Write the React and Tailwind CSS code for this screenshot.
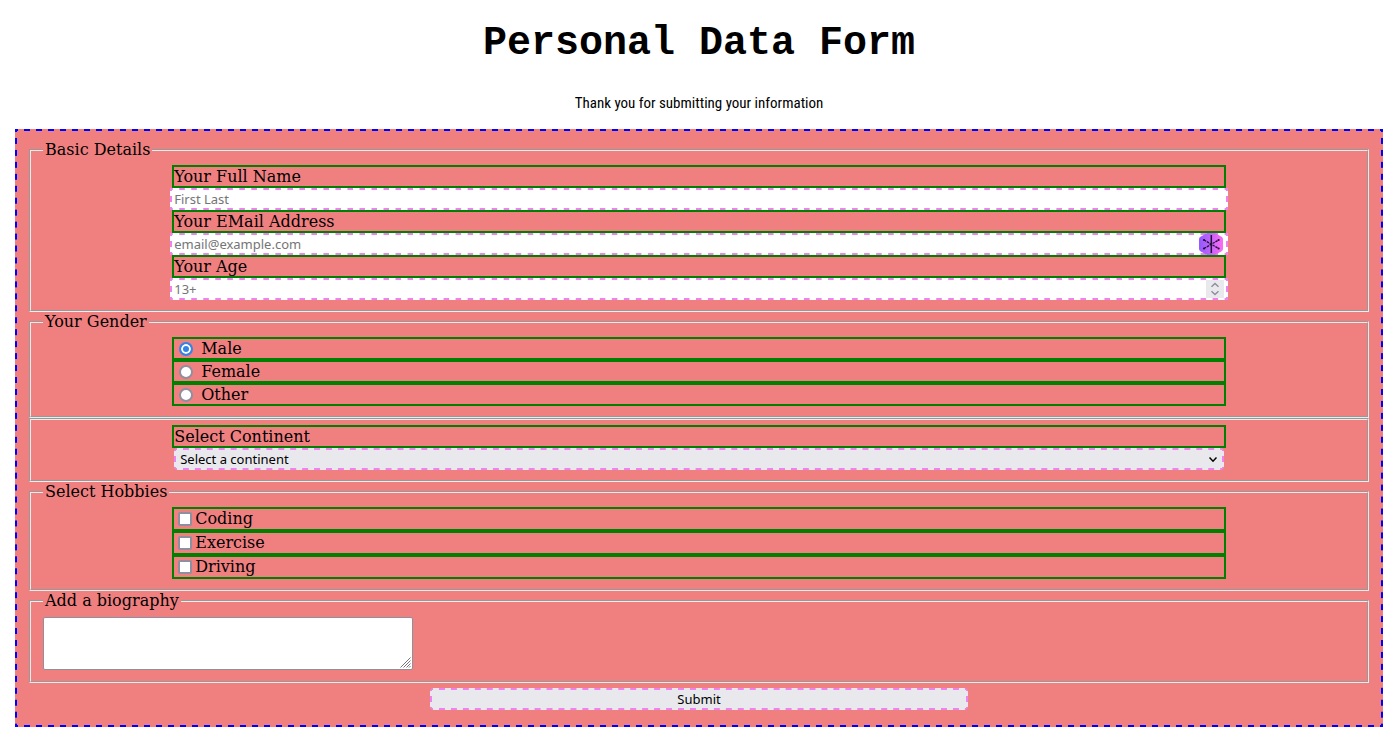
import { useId } from "react";

// Evenly spaced 6px dashes along all four edges, coloured by --dash.
const dashed =
  "border-2 border-transparent bg-origin-border [background-image:linear-gradient(90deg,var(--dash)_25%,transparent_25%_75%,var(--dash)_75%),linear-gradient(90deg,var(--dash)_25%,transparent_25%_75%,var(--dash)_75%),linear-gradient(var(--dash)_25%,transparent_25%_75%,var(--dash)_75%),linear-gradient(var(--dash)_25%,transparent_25%_75%,var(--dash)_75%)] [background-position:0_0,0_100%,0_0,100%_0] [background-repeat:round_no-repeat,round_no-repeat,no-repeat_round,no-repeat_round] [background-size:12px_2px,12px_2px,2px_12px,2px_12px]";

const control = `${dashed} [--dash:violet] block h-[22px] w-full font-['Noto_Sans',sans-serif] text-[13px] leading-[18px] outline-none`;

function Group({ legend, className = "pt-[6px] pb-[10px]", children }) {
  return (
    <fieldset className={`border-2 border-[#ececec] px-3 [border-style:groove] ${className}`}>
      {legend && <legend className="px-[2px] leading-[19px]">{legend}</legend>}
      {children}
    </fieldset>
  );
}

function Column({ children }) {
  return <div className="mx-auto w-[calc(80%+4px)]">{children}</div>;
}

function Field({ label, children, ...input }) {
  const id = useId();
  return (
    <>
      <label htmlFor={id} className="block border-2 border-[green] leading-[19px]">
        {label}
      </label>
      <div className="relative -mx-[2px]">
        <input
          id={id}
          className={`${control} bg-white px-[2px] text-black [appearance:textfield] placeholder:text-[#757575] [&::-webkit-inner-spin-button]:appearance-none`}
          {...input}
        />
        {children}
      </div>
    </>
  );
}

function Radio({ label, ...props }) {
  return (
    <label className="flex items-center border-2 border-[green] pl-[5px] leading-[19px]">
      <input
        type="radio"
        name="gender"
        className="mr-2 size-[14px] appearance-none rounded-full border-2 border-[#8f8f9d] bg-white checked:border-[#3584e4] checked:bg-[#3584e4] checked:shadow-[inset_0_0_0_2px_white]"
        {...props}
      />
      {label}
    </label>
  );
}

function Check({ label }) {
  return (
    <label className="flex items-center border-2 border-[green] pl-1 leading-5">
      <input
        type="checkbox"
        className="mr-[3px] size-[14px] appearance-none rounded-[2px] border-2 border-[#8f8f9d] bg-white checked:bg-[#3584e4]"
      />
      {label}
    </label>
  );
}

function MaskIcon() {
  return (
    <svg viewBox="0 0 24 22" className="absolute top-0 right-[5px] h-[22px] w-6" aria-hidden="true">
      <defs>
        <linearGradient id="mask" x1="0" x2="1" y1="0" y2="0">
          <stop offset="0" stopColor="#9059ff" />
          <stop offset="1" stopColor="#ff6bf5" />
        </linearGradient>
      </defs>
      <path d="M8 0h8l6.500 3.700Q24 4.600 24 6.300v9.400q0 1.700-1.500 2.600L16 22H8l-6.500-3.700Q0 17.400 0 15.700V6.300Q0 4.600 1.500 3.700Z" fill="url(#mask)" />
      <path d="M12.300 2v18" stroke="#20123a" strokeWidth="1.500" />
      <path d="M5 7l14.600 8.500M5 15.500L19.600 7" stroke="#20123a" strokeWidth="1.300" strokeDasharray="2.500 .8" />
      <g fill="#20123a">
        <circle cx="5" cy="7" r="1.100" />
        <circle cx="19.600" cy="7" r="1.100" />
        <circle cx="5" cy="15.500" r="1.100" />
        <circle cx="19.600" cy="15.500" r="1.100" />
      </g>
    </svg>
  );
}

function Spinner() {
  return (
    <svg viewBox="0 0 18 18" className="absolute top-[2px] right-1 size-[18px] bg-[#e9e9ed]" aria-hidden="true">
      <path d="M5.500 6.800L9 3.500l3.500 3.300M5.500 11.200L9 14.500l3.500-3.300" fill="none" stroke="#8f8f9d" strokeWidth="1.500" />
    </svg>
  );
}

export default function App() {
  return (
    <main className="bg-white pt-[21px] pr-4 pb-[17px] pl-[15px] font-['DejaVu_Serif',serif] text-base text-black">
      <h1 className="text-center font-['Liberation_Mono',monospace] text-[40px] leading-[46px] font-bold">
        Personal Data Form
      </h1>
      <p className="mt-[27px] mb-4 text-center font-['Liberation_Sans_Narrow','Arial_Narrow','Roboto_Condensed','Liberation_Sans',sans-serif] text-[15px] leading-[19px]">
        Thank you for submitting your information
      </p>
      <form
        className={`${dashed} bg-[lightcoral] px-3 pt-[9px] pb-[15px] [--dash:blue]`}
        onSubmit={(e) => e.preventDefault()}
      >
        <Group legend="Basic Details">
          <Column>
            <Field label="Your Full Name" type="text" placeholder="First Last" />
            <Field label="Your EMail Address" type="email" placeholder="email@example.com">
              <MaskIcon />
            </Field>
            <Field label="Your Age" type="number" min="13" placeholder="13+">
              <Spinner />
            </Field>
          </Column>
        </Group>

        <Group legend="Your Gender">
          <Column>
            <Radio label="Male" value="male" defaultChecked />
            <Radio label="Female" value="female" />
            <Radio label="Other" value="other" />
          </Column>
        </Group>

        <Group className="pt-[5px] pb-[10px]">
          <Column>
            <label htmlFor="continent" className="block border-2 border-[green] leading-[19px]">
              Select Continent
            </label>
            <div className="relative mx-[2px]">
              <select
                id="continent"
                defaultValue=""
                className={`${control} appearance-none rounded-[4px] bg-[#e9e9ed] px-1 text-black`}
              >
                <option value="">Select a continent</option>
                <option>Africa</option>
                <option>Asia</option>
                <option>Europe</option>
              </select>
              <svg viewBox="0 0 8 6" className="pointer-events-none absolute top-[9px] right-[7px] h-[6px] w-2" aria-hidden="true">
                <path d="M.5 .5L4 4.200 7.500 .5" fill="none" stroke="black" strokeWidth="1.500" />
              </svg>
            </div>
          </Column>
        </Group>

        <Group legend="Select Hobbies">
          <Column>
            <Check label="Coding" />
            <Check label="Exercise" />
            <Check label="Driving" />
          </Column>
        </Group>

        <Group legend="Add a biography" className="pt-[7px] pb-[11px]">
          <div className="relative w-[370px] max-w-full">
            <textarea
              aria-label="Biography"
              className="block h-[53px] w-full resize-none rounded-[2px] border border-[#8f8f9d] bg-white p-[2px] font-['Noto_Sans',sans-serif] text-[13px] outline-none"
            />
            <svg viewBox="0 0 11 11" className="pointer-events-none absolute right-[2px] bottom-[2px] size-[11px]" aria-hidden="true">
              <path d="M.5 10.500l10-10M3.500 10.500l7-7M6.500 10.500l4-4M9 10.500l1.500-1.500" stroke="#777" fill="none" />
            </svg>
          </div>
        </Group>

        <button
          type="submit"
          className={`${control} mx-auto mt-[5px] max-w-[calc(40%+2px)] rounded-[4px] bg-[#e9e9ed] text-center`}
        >
          Submit
        </button>
      </form>
    </main>
  );
}
